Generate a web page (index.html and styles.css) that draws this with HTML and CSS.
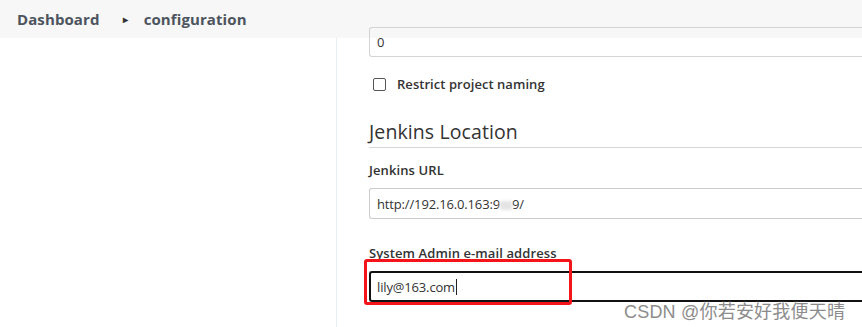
FILE: index.html
```html
<!DOCTYPE html>
<html>
<head>
<meta charset="utf-8">
<link rel="stylesheet" href="styles.css">
</head>
<body>
<header class="topbar">
  <nav class="crumbs">
    <a class="crumb">Dashboard</a>
    <span class="sep">&#9656;</span>
    <a class="crumb">configuration</a>
  </nav>
</header>
<div class="page">
  <aside class="side"></aside>
  <main class="main">
    <div class="input partial"><span class="val">0</span></div>
    <label class="check"><span class="box"></span><span class="check-label">Restrict project naming</span></label>
    <h2 class="section">Jenkins Location</h2>
    <div class="field">
      <div class="label">Jenkins URL</div>
      <div class="input"><span class="val">http://192.16.0.163:9<span class="blur"></span>9/</span></div>
    </div>
    <div class="field email-field">
      <div class="label">System Admin e-mail address</div>
      <div class="input focused"><span class="val">lily@163.com</span><span class="caret"></span></div>
      <div class="highlight"></div>
    </div>
  </main>
</div>
<div class="watermark">CSDN @你若安好我便天晴</div>
</body>
</html>
```
FILE: styles.css
```css
html, body {
  margin: 0;
  padding: 0;
  background: #fff;
  font-family: "Open Sans", "Noto Sans", "Noto Sans CJK SC", sans-serif;
  color: #333;
  overflow: hidden;
  height: 327px;
}
.topbar {
  height: 38px;
  background: #f7f7f7;
  display: flex;
  align-items: center;
  padding-left: 17px;
}
.crumbs {
  display: flex;
  align-items: center;
  font-weight: 700;
  font-size: 15px;
  color: #4d545d;
  letter-spacing: 0.1px;
}
.sep {
  font-size: 10px;
  margin: 0 16px 0 23px;
  color: #333;
}
.page {
  display: flex;
  height: 289px;
}
.side {
  width: 336px;
  border-right: 1px solid #e9eef2;
  flex: none;
}
.main {
  flex: 1;
  padding-left: 32px;
  position: relative;
}
.input {
  box-sizing: border-box;
  height: 31px;
  border: 1px solid #ccc;
  border-right: none;
  border-radius: 3px 0 0 3px;
  display: flex;
  align-items: center;
  padding-left: 7px;
  font-size: 13px;
  color: #333;
  letter-spacing: -0.15px;
}
.input.partial {
  margin-top: -11px;
  height: 30px;
  border-color: #d4d4d4;
}
.blur {
  display: inline-block;
  width: 12px;
  height: 9px;
  background: #e4e4e4;
  vertical-align: middle;
  filter: blur(1.5px);
}
.check {
  display: flex;
  align-items: center;
  margin-top: 20px;
  padding-left: 4px;
  height: 14px;
}
.box {
  width: 11px;
  height: 11px;
  border: 1px solid #555;
  border-radius: 2px;
  margin-right: 11px;
}
.check-label {
  font-size: 13px;
  font-weight: 600;
  color: #333;
  letter-spacing: 0.05px;
}
.section {
  margin: 28px 0 0;
  font-size: 19.5px;
  font-weight: 500;
  color: #333;
  padding-bottom: 2px;
  border-bottom: 1px solid #d6d6d6;
  line-height: 26px;
  letter-spacing: 0.1px;
}
.field {
  position: relative;
}
.label {
  font-size: 13px;
  font-weight: 600;
  color: #333;
  margin-top: 13px;
  margin-bottom: 9px;
  letter-spacing: 0.1px;
  line-height: 18px;
}
.email-field .label {
  margin-top: 25px;
  margin-bottom: 9px;
}
.input.focused {
  border: 2px solid #111;
  border-right: none;
  padding-left: 6px;
}
.caret {
  width: 1px;
  height: 16px;
  background: #222;
  margin-left: 1px;
}
.highlight {
  position: absolute;
  left: -5px;
  top: 15px;
  width: 202px;
  height: 40px;
  border: 3px solid #f5141a;
  border-radius: 3px;
}
.watermark {
  position: absolute;
  left: 624px;
  top: 297px;
  font-family: "Liberation Sans", "Noto Sans CJK SC", sans-serif;
  font-size: 18px;
  color: #8c8c8c;
  text-shadow: 0 0 2px #fff, 0 0 1px #fff;
  letter-spacing: 0.2px;
}
```
